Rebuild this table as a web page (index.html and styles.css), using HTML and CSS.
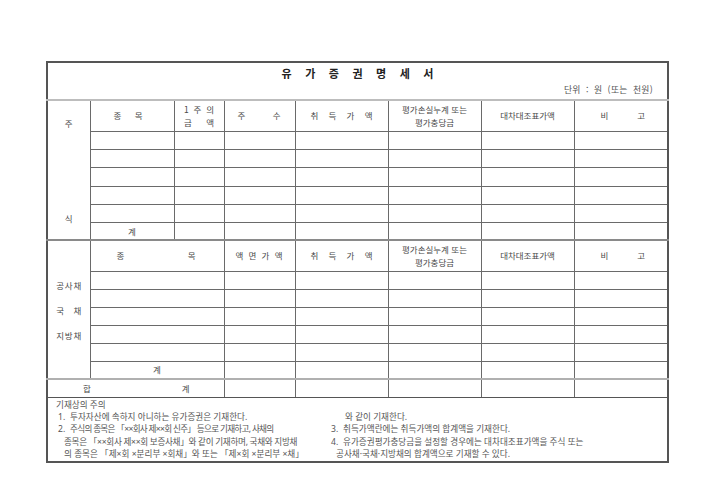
FILE: index.html
```html
<!DOCTYPE html>
<html lang="ko">
<head>
<meta charset="utf-8">
<title>유가증권명세서</title>
<link rel="stylesheet" href="styles.css">
</head>
<body>
<table class="sheet">
  <colgroup>
    <col class="c1"><col class="c2"><col class="c3"><col class="c4"><col class="c5"><col class="c6"><col class="c7"><col class="c8">
  </colgroup>
  <tr class="r-title">
    <td colspan="8" class="title-cell">
      <div class="title"><span>유</span><span>가</span><span>증</span><span>권</span><span>명</span><span>세</span><span>서</span></div>
      <div class="unit">단위 : 원 (또는 천원)</div>
    </td>
  </tr>
  <tr class="r-head">
    <td rowspan="7" class="side side-stock"><div class="side-inner"><span>주</span><span>식</span></div></td>
    <td><div class="spread p-jm1"><span>종</span><span>목</span></div></td>
    <td><div class="spread p-won"><span>1</span><span>주</span><span>의</span></div><div class="spread p-won"><span>금</span><span>액</span></div></td>
    <td><div class="spread p-ju"><span>주</span><span>수</span></div></td>
    <td><div class="spread p-chi"><span>취</span><span>득</span><span>가</span><span>액</span></div></td>
    <td class="two">평가손실누계 또는<br>평가충당금</td>
    <td>대차대조표가액</td>
    <td><div class="spread p-bi"><span>비</span><span>고</span></div></td>
  </tr>
  <tr class="r-row"><td></td><td></td><td></td><td></td><td></td><td></td><td></td></tr>
  <tr class="r-row"><td></td><td></td><td></td><td></td><td></td><td></td><td></td></tr>
  <tr class="r-row"><td></td><td></td><td></td><td></td><td></td><td></td><td></td></tr>
  <tr class="r-row lite"><td></td><td></td><td></td><td></td><td></td><td></td><td></td></tr>
  <tr class="r-row"><td></td><td></td><td></td><td></td><td></td><td></td><td></td></tr>
  <tr class="r-row sec-end"><td>계</td><td></td><td></td><td></td><td></td><td></td><td></td></tr>

  <tr class="r-head sec2">
    <td rowspan="7" class="side side-bond"><div class="bond-labels"><div class="spread"><span>공</span><span>사</span><span>채</span></div><div class="spread"><span>국</span><span>채</span></div><div class="spread"><span>지</span><span>방</span><span>채</span></div></div></td>
    <td colspan="2"><div class="spread p-jm2"><span>종</span><span>목</span></div></td>
    <td><div class="spread p-ak"><span>액</span><span>면</span><span>가</span><span>액</span></div></td>
    <td><div class="spread p-chi"><span>취</span><span>득</span><span>가</span><span>액</span></div></td>
    <td class="two">평가손실누계 또는<br>평가충당금</td>
    <td>대차대조표가액</td>
    <td><div class="spread p-bi"><span>비</span><span>고</span></div></td>
  </tr>
  <tr class="r-row"><td colspan="2"></td><td></td><td></td><td></td><td></td><td></td></tr>
  <tr class="r-row"><td colspan="2"></td><td></td><td></td><td></td><td></td><td></td></tr>
  <tr class="r-row lite"><td colspan="2"></td><td></td><td></td><td></td><td></td><td></td></tr>
  <tr class="r-row"><td colspan="2"></td><td></td><td></td><td></td><td></td><td></td></tr>
  <tr class="r-row"><td colspan="2"></td><td></td><td></td><td></td><td></td><td></td></tr>
  <tr class="r-row sec2-end"><td colspan="2">계</td><td></td><td></td><td></td><td></td><td></td></tr>
  <tr class="r-row r-total">
    <td colspan="3"><div class="spread p-hap"><span>합</span><span>계</span></div></td>
    <td></td><td></td><td></td><td></td><td></td>
  </tr>
  <tr class="r-notes">
    <td colspan="8" class="notes">
      <div class="notes-grid">
        <div class="ncol left">
          <div class="ln">기재상의 주의</div>
          <div class="ln"><span class="num">1.</span><span class="t l1">투자자산에 속하지 아니하는 유가증권은 기재한다.</span></div>
          <div class="ln"><span class="num">2.</span><span class="t l2">주식의 종목은 「××회사 제××회 신주」 등으로 기재하고, 사채의</span></div>
          <div class="ln cont"><span class="t l3">종목은 「××회사 제××회 보증사채」와 같이 기재하며, 국채와 지방채</span></div>
          <div class="ln cont"><span class="t l4">의 종목은 「제×회 ×분리부 ×회채」와 또는 「제×회 ×분리부 ×채」</span></div>
        </div>
        <div class="ncol right">
          <div class="ln cont2">와 같이 기재한다.</div>
          <div class="ln"><span class="num">3.</span><span class="t r2">취득가액란에는 취득가액의 합계액을 기재한다.</span></div>
          <div class="ln"><span class="num">4.</span><span class="t r3">유가증권평가충당금을 설정할 경우에는 대차대조표가액을 주식 또는</span></div>
          <div class="ln cont3"><span class="t r4">공사채·국채·지방채의 합계액으로 기재할 수 있다.</span></div>
        </div>
      </div>
    </td>
  </tr>
</table>
</body>
</html>
```

FILE: styles.css
```css
* { box-sizing: border-box; }

body {
  margin: 0;
  background: #fff;
  font-family: "Noto Sans CJK KR", "Noto Sans", sans-serif;
  color: #4a4a4a;
}

.sheet {
  border-collapse: collapse;
  table-layout: fixed;
  width: 621px;
  margin: 61px 0 0 46px;
  border: 2px solid #555;
  font-size: 8.5px;
}

.c1 { width: 43px; }
.c2 { width: 84px; }
.c3 { width: 50px; }
.c4 { width: 71px; }
.c5 { width: 93px; }
.c6 { width: 93px; }
.c7 { width: 93px; }
.c8 { width: 94px; }

.sheet td {
  border: 1px solid #6a6a6a;
  padding: 0;
  text-align: center;
  vertical-align: middle;
  line-height: 13px;
}

.r-title td { height: 38px; }
.r-head td { height: 31px; }
.r-row td { height: 18px; }
.sec-end td { height: 17px; }
.r-notes td { height: 64px; }

.title-cell {
  border-bottom: 2px solid #bdbdbd !important;
  vertical-align: top !important;
}

.title {
  display: flex;
  justify-content: center;
  gap: 13.5px;
  font-size: 11px;
  font-weight: bold;
  color: #222;
  line-height: 14px;
  padding-top: 3px;
}

.unit {
  text-align: right;
  padding: 4px 14px 0 0;
  line-height: 12px;
  color: #555;
  font-size: 8.8px;
  word-spacing: 2.5px;
  letter-spacing: 0.3px;
}

.spread {
  display: flex;
  justify-content: space-between;
}
.p-jm1 { padding: 0 31px 0 23px; }
.p-won { width: 30px; margin: 0 auto; }
.p-ju { padding: 0 14px 0 13px; }
.p-chi { padding: 0 15px; }
.p-bi { padding: 0 22px 0 26px; }
.p-jm2 { padding: 0 28px 0 26px; }
.p-ak { padding: 0 12px 0 11px; }
.p-hap { padding: 0 34px 0 35px; }

.two { line-height: 13px; }

.side-inner {
  display: flex;
  flex-direction: column;
  justify-content: space-between;
  align-items: center;
  height: 138px;
  padding: 16px 0 14px;
}

.bond-labels {
  width: 25px;
  margin: 0 auto;
  line-height: 25px;
  padding-top: 2px;
}

.sec-end td { border-bottom: 2px solid #8a8a8a; }
.sec2 td { border-top: 2px solid #8a8a8a; }
.sec2-end td { border-bottom: 2px solid #b0b0b0; }
.side-bond { border-bottom: 2px solid #b0b0b0 !important; }
.lite td { border-top-color: #a8a8a8; }

.r-total td { border-bottom: 1px solid #555; }

.notes {
  text-align: left !important;
  vertical-align: top !important;
  padding: 1px 0 0 0 !important;
}

.notes-grid {
  display: flex;
  font-family: "Noto Sans", "Noto Sans CJK KR", sans-serif;
  font-size: 8.6px;
  line-height: 12.4px;
  color: #555;
  white-space: nowrap;
}

.ncol.left { width: 283px; padding-left: 8px; }
.ncol.right { padding-top: 12.4px; }

.num { display: inline-block; width: 14px; padding-left: 2px; }
.right .num { width: 12px; padding-left: 0; }
.ln.cont { padding-left: 8px; }
.ln.cont2 { padding-left: 14px; }
.ln.cont3 { padding-left: 5px; }

.l2 { letter-spacing: -0.7px; }
.l3 { letter-spacing: -0.3px; }
.l4 { letter-spacing: 0; }
```
